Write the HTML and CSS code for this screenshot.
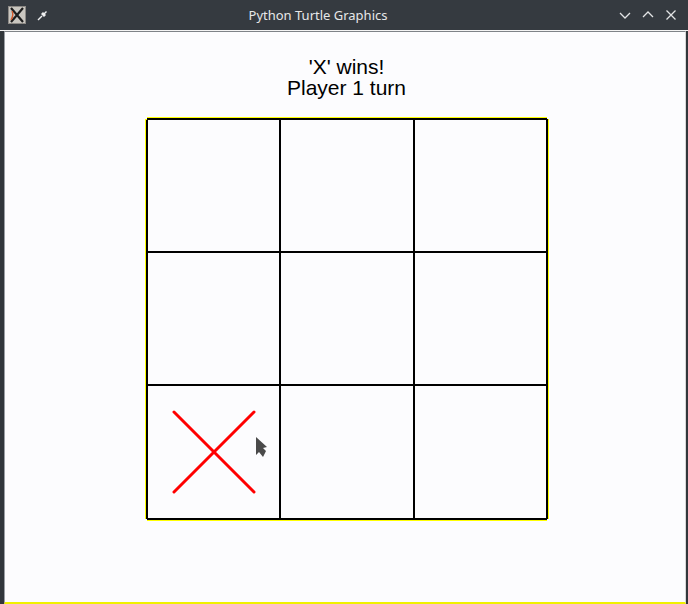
FILE: index.html
```html
<!DOCTYPE html>
<html>
<head>
<meta charset="utf-8">
<title>Python Turtle Graphics</title>
<link rel="stylesheet" href="styles.css">
</head>
<body>
<div class="window">
  <div class="titlebar">
    <div class="tb-left">
      <svg class="appicon" width="18" height="18" viewBox="0 0 18 18">
        <rect x="0.5" y="0.5" width="17" height="17" fill="#c9c6c0" stroke="#8d8a86"/>
        <path d="M3 2 L15 16 M15 2 L3 16" stroke="#1d1d1d" stroke-width="2.2"/>
        <path d="M3 14 Q6 9 4 5" stroke="#d2592a" stroke-width="1.4" fill="none"/>
      </svg>
      <svg class="pin" width="12" height="12" viewBox="0 0 12 12">
        <path d="M1 11 L5 7" stroke="#eff0f1" stroke-width="1.4"/>
        <path d="M4 5 L7 8 L9 6 L8 5 L10 3 L9 2 L7 4 L6 3 Z" fill="#eff0f1"/>
      </svg>
    </div>
    <div class="tb-title">Python Turtle Graphics</div>
    <div class="tb-right">
      <svg width="12" height="12" viewBox="0 0 12 12"><path d="M1 4 L6 9 L11 4" stroke="#e3e4e5" stroke-width="1.3" fill="none"/></svg>
      <svg width="12" height="12" viewBox="0 0 12 12"><path d="M1 8 L6 3 L11 8" stroke="#e3e4e5" stroke-width="1.3" fill="none"/></svg>
      <svg width="12" height="12" viewBox="0 0 12 12"><path d="M1.5 1.5 L10.5 10.5 M10.5 1.5 L1.5 10.5" stroke="#e3e4e5" stroke-width="1.3"/></svg>
    </div>
  </div>
  <div class="frame">
    <div class="client">
      <div class="status">
        <div>'X' wins!</div>
        <div>Player 1 turn</div>
      </div>
      <svg class="board" width="404" height="404" viewBox="0 0 404 404">
        <g stroke="#ffff00" stroke-width="2" fill="none">
          <path d="M1 2 L1 402"/>
          <path d="M2 1 L402 1"/>
          <path d="M2 403 L402 403"/>
          <path d="M403 2 L403 402"/>
        </g>
        <g stroke="#000" stroke-width="2" fill="none">
          <path d="M2 3 L2 402"/>
          <path d="M135 2 L135 402"/>
          <path d="M269 2 L269 402"/>
          <path d="M402 2 L402 402"/>
          <path d="M2 2 L402 2"/>
          <path d="M2 135 L402 135"/>
          <path d="M2 268 L402 268"/>
          <path d="M2 402 L402 402"/>
        </g>
        <g stroke="#ff0000" stroke-width="3" stroke-linecap="round">
          <path d="M29 295 L109 375"/>
          <path d="M109 295 L29 375"/>
        </g>
        <path class="cursor" d="M111 320 L111 338 L114 335 L118 340 L121 334 L118 331 L122 330 Z" fill="#4a4a4a"/>
      </svg>
    </div>
  </div>
</div>
</body>
</html>
```

FILE: styles.css
```css
html, body {
  margin: 0;
  padding: 0;
  background: #31363b;
}
.window {
  width: 688px;
  height: 604px;
  display: flex;
  flex-direction: column;
  background: #31363b;
  overflow: hidden;
}
.titlebar {
  height: 30px;
  display: flex;
  align-items: center;
  background: #353a40;
  border-bottom: 1px solid #f4f4f4;
}
.tb-left {
  display: flex;
  align-items: center;
  gap: 11px;
  padding-left: 8px;
}
.tb-title {
  flex: 1;
  text-align: center;
  color: #e6e7e8;
  font-family: "Noto Sans", "DejaVu Sans", sans-serif;
  font-size: 13px;
  padding-right: 32px;
}
.tb-right {
  display: flex;
  align-items: center;
  gap: 11px;
  padding-right: 11px;
}
.frame {
  flex: 1;
  display: flex;
  margin: 0 2px 0 4px;
  border-left: 1px solid #9a9ea4;
  border-top: 1px solid #7f8388;
  border-right: 1px solid #d8d8d8;
  border-bottom: 2px solid #f0f000;
  background: #fcfcfe;
}
.client {
  flex: 1;
  display: flex;
  flex-direction: column;
  align-items: center;
  padding-left: 3px;
  padding-top: 24px;
}
.status {
  font-family: "Liberation Sans", Arial, sans-serif;
  font-size: 21px;
  line-height: 21px;
  color: #000;
  text-align: center;
}
.board {
  display: block;
  margin-top: 19px;
}
```
